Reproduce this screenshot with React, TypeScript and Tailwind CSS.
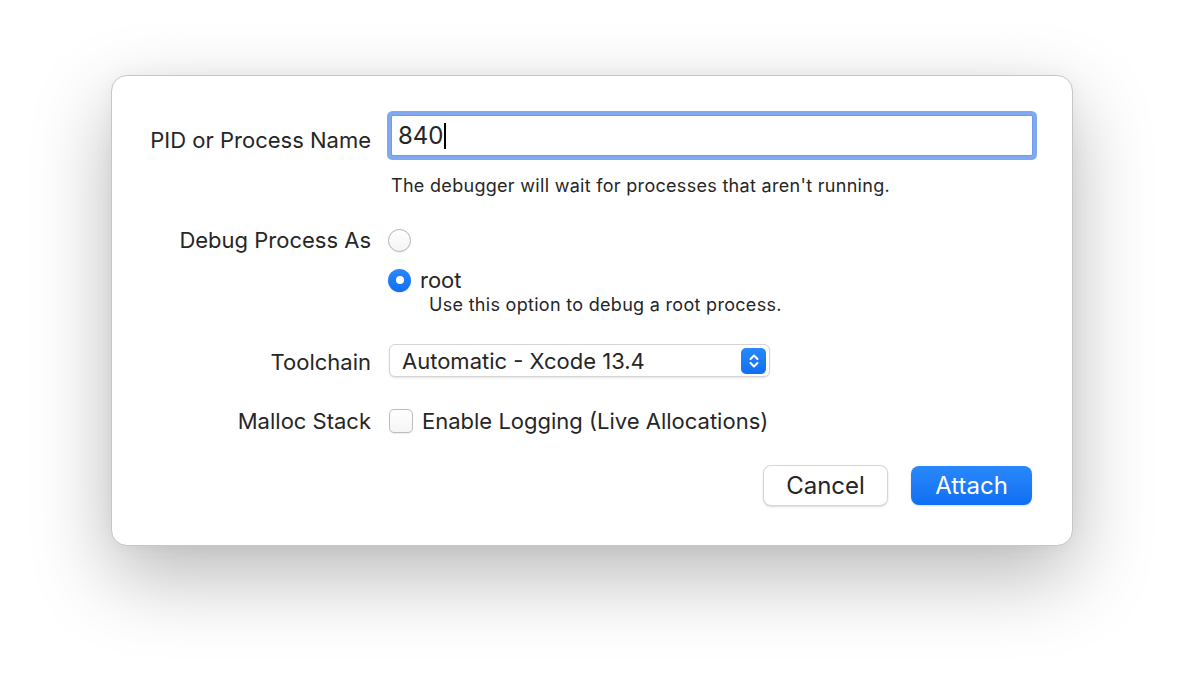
import React from "react";

const font = { fontFamily: "Inter, 'Liberation Sans', sans-serif" };

const Label: React.FC<{ children: React.ReactNode; className?: string }> = ({ children, className = "" }) => (
  <div className={`w-[259px] shrink-0 text-right text-[22px] leading-[28px] text-[#262626] ${className}`}>
    {children}
  </div>
);

const Radio: React.FC<{ checked?: boolean }> = ({ checked }) =>
  checked ? (
    <span className="block shrink-0 w-[23px] h-[23px] rounded-full bg-gradient-to-b from-[#2a88fb] to-[#0f6ff2] flex items-center justify-center shadow-[0_0.5px_1px_rgba(0,0,0,0.2)]">
      <span className="block w-[8px] h-[8px] rounded-full bg-white" />
    </span>
  ) : (
    <span className="block shrink-0 w-[23px] h-[23px] rounded-full border border-[#b4b4b4] bg-gradient-to-b from-white to-[#f4f4f4] shadow-[0_0.5px_1px_rgba(0,0,0,0.1)]" />
  );

export default function App() {
  return (
    <div className="w-[1184px] h-[694px] bg-white overflow-hidden pt-[75px]" style={font}>
      <div className="mx-auto w-[962px] h-[471px] bg-white rounded-[16px] border border-[#c6c6c6] shadow-[0_30px_80px_rgba(0,0,0,0.28),0_0_20px_rgba(0,0,0,0.04)] pt-[39px] flex flex-col">
        {/* PID row */}
        <div className="flex items-start">
          <Label className="pt-[11px]">PID or Process Name</Label>
          <div className="ml-[20px] w-[642px] h-[41px] bg-white border border-[#6f9be6] shadow-[0_0_0_4px_#80a9f2] rounded-[2px] flex items-center px-[6px]">
            <span className="text-[24px] text-[#262626] leading-none">840</span>
            <span className="block w-[2px] h-[26px] bg-black" />
          </div>
        </div>
        <div className="ml-[279px] mt-[19px] text-[18px] leading-[22px] tracking-[0.3px] text-[#262626]">
          The debugger will wait for processes that aren't running.
        </div>

        {/* Debug Process As */}
        <div className="flex items-center h-[28px] mt-[29px]">
          <Label>Debug Process As</Label>
          <div className="ml-[17px]">
            <Radio />
          </div>
        </div>
        <div className="flex items-center h-[28px] mt-[12px] ml-[276px]">
          <Radio checked />
          <span className="ml-[9px] text-[22px] leading-[28px] text-[#262626]">root</span>
        </div>
        <div className="ml-[317px] text-[18px] leading-[22px] tracking-[0.3px] text-[#262626]">
          Use this option to debug a root process.
        </div>

        {/* Toolchain */}
        <div className="flex items-center h-[33px] mt-[28px]">
          <Label className="mt-[3px]">Toolchain</Label>
          <div className="ml-[18px] w-[381px] h-[33px] bg-white rounded-[6px] border border-[#d4d4d4] shadow-[0_1px_2px_rgba(0,0,0,0.12)] flex items-center pl-[12px] pr-[3px]">
            <span className="flex-1 text-[22px] leading-[28px] text-[#262626]">Automatic - Xcode 13.4</span>
            <span className="w-[25px] h-[26px] rounded-[5px] bg-gradient-to-b from-[#2a88fb] to-[#0f6ff2] flex items-center justify-center">
              <svg width="12" height="18" viewBox="0 0 12 18" fill="none" stroke="white" strokeWidth="2" strokeLinecap="round" strokeLinejoin="round">
                <path d="M2.5 7 L6 3.5 L9.5 7" />
                <path d="M2.5 11 L6 14.5 L9.5 11" />
              </svg>
            </span>
          </div>
        </div>

        {/* Malloc Stack */}
        <div className="flex items-center h-[28px] mt-[30px]">
          <Label>Malloc Stack</Label>
          <div className="ml-[18px] flex items-center">
            <span className="block w-[24px] h-[24px] rounded-[5px] border border-[#bdbdbd] bg-gradient-to-b from-white to-[#f5f5f5] shadow-[0_0.5px_1px_rgba(0,0,0,0.08)]" />
            <span className="ml-[9px] text-[22px] leading-[28px] text-[#262626]">Enable Logging (Live Allocations)</span>
          </div>
        </div>

        {/* Buttons */}
        <div className="flex justify-end items-center mt-[30px] pr-[40px] gap-[23px]">
          <button className="w-[125px] h-[41px] rounded-[8px] bg-white border border-[#d6d6d6] shadow-[0_1px_2px_rgba(0,0,0,0.15)] text-[24px] text-[#262626]">
            Cancel
          </button>
          <button className="w-[121px] h-[39px] rounded-[8px] bg-gradient-to-b from-[#2a88fb] to-[#0f6ff2] shadow-[0_1px_2px_rgba(0,0,0,0.15)] text-[24px] text-white">
            Attach
          </button>
        </div>
      </div>
    </div>
  );
}
